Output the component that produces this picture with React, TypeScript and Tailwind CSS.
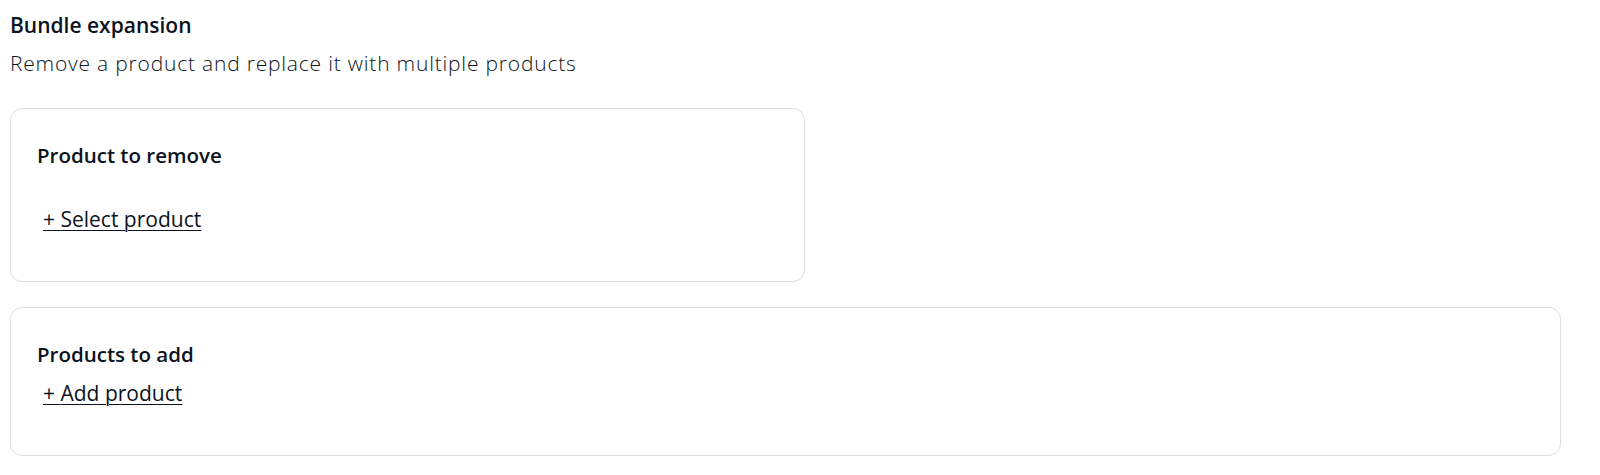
import React from "react";

const ProductCard = ({ title, action, wide, gap }: { title: string; action: string; wide?: boolean; gap: string }) => {
    return (
        <div className={`${wide ? "w-[1551px]" : "w-[795px]"} border border-[#dedede] rounded-xl bg-white pl-[26px] pt-[33px] pb-[48px]`}>
            <h2 className="text-[20.5px] leading-[26px] font-semibold text-[#0d1321]">{title}</h2>
            <div className={gap}>
                <button className="px-[6px] text-[21px] leading-[26px] text-[#0d1321] underline underline-offset-[3px] decoration-1">
                    + {action}
                </button>
            </div>
        </div>
    );
};

export default function App() {
    return (
        <div className="min-h-screen bg-white px-[10px] pt-[12px] font-['Open_Sans',sans-serif] text-[#0d1321]">
            <h1 className="text-[21px] leading-[26px] font-semibold">Bundle expansion</h1>
            <p className="mt-[12px] text-[21px] leading-[26px] font-light tracking-[0.8px]">Remove a product and replace it with multiple products</p>
            <div className="mt-[32px] flex flex-col gap-[25px]">
                <ProductCard title="Product to remove" action="Select product" gap="mt-[38px]" />
                <ProductCard title="Products to add" action="Add product" wide gap="mt-[13px]" />
            </div>
        </div>
    );
}
